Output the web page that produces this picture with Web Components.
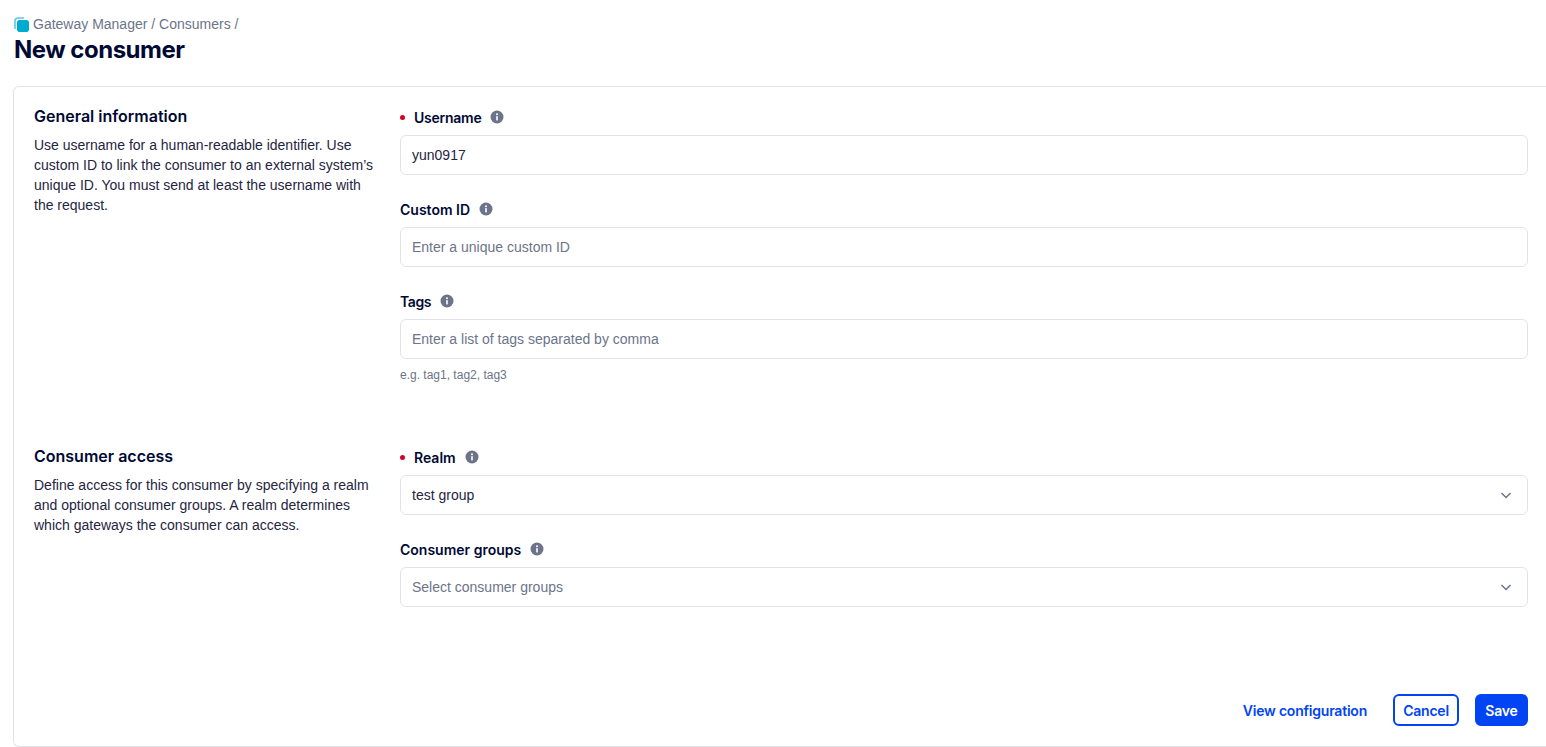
<!DOCTYPE html>
<html>
<head>
<meta charset="utf-8">
<title>New consumer</title>
<style>
  html, body { margin: 0; height: 100%; overflow: hidden; background: #fff; }
  body { font-family: Inter, "Liberation Sans", sans-serif; color: #000933; }
</style>
</head>
<body>
<template id="page-header-tpl">
  <style>
    :host { display: block; padding: 15px 13px 0 14px; height: 86px; box-sizing: border-box; }
    nav { display: flex; align-items: center; height: 18px; font-family: "Liberation Sans", sans-serif; font-size: 14px; color: #6c7489; white-space: pre; }
    svg { width: 15px; height: 15px; margin-right: 4px; flex: none; }
    h1 { margin: 3px 0 0; font-size: 24px; line-height: 28px; font-weight: 700; letter-spacing: -.5px; color: #000933; }
  </style>
  <nav>
    <svg viewBox="0 0 15 15">
      <path d="M1 12V4a3 3 0 0 1 3-3h6" fill="none" stroke="#5fc6e0" stroke-width="1.6"/>
      <rect x="3" y="3" width="12" height="12" rx="2.8" fill="#00abd2"/>
    </svg>
    <span><slot></slot></span>
  </nav>
  <h1><slot name="title"></slot></h1>
</template>

<template id="form-card-tpl">
  <style>
    :host { display: flex; flex-direction: column; height: 661px; box-sizing: border-box; margin-left: 13px;
      border: 1px solid #e0e4ea; border-right: 0; border-radius: 6px 0 0 6px; padding: 20px 18px 20px 20px; }
    .sections { flex: 1; display: flex; flex-direction: column; gap: 64px; }
    .actions { display: flex; justify-content: flex-end; align-items: center; }
  </style>
  <div class="sections"><slot></slot></div>
  <div class="actions"><slot name="actions"></slot></div>
</template>

<template id="form-section-tpl">
  <style>
    :host { display: grid; grid-template-columns: 340px 1fr; column-gap: 26px; }
    h2 { margin: -1px 0 9px; font-size: 16px; line-height: 20px; font-weight: 600; color: #000933; }
    p { margin: 0; font-family: "Liberation Sans", sans-serif; font-size: 14px; line-height: 20px; color: #1f2542; }
    .fields { display: flex; flex-direction: column; gap: 24px; }
  </style>
  <div>
    <h2><slot name="title"></slot></h2>
    <p><slot name="desc"></slot></p>
  </div>
  <div class="fields"><slot></slot></div>
</template>

<template id="form-field-tpl">
  <style>
    :host { display: block; }
    label { display: flex; align-items: center; height: 20px; margin-bottom: 8px; font-size: 14px; font-weight: 600; color: #000933; }
    .dot { display: none; width: 5px; height: 5px; border-radius: 50%; background: #d60027; margin-right: 9px; }
    :host([required]) .dot { display: block; }
    svg { width: 14px; height: 14px; margin-left: 9px; }
    .box { display: flex; align-items: center; height: 40px; box-sizing: border-box; padding: 0 11px;
      border: 1px solid #e0e4ea; border-radius: 6px; font-family: "Liberation Sans", sans-serif; font-size: 14px; letter-spacing: 0; color: #1f2542; background: #fff; }
    .value { flex: 1; }
    :host([placeholder]) .value { color: #6c7489; }
    .chev { display: none; width: 14px; height: 14px; margin: 0 3px 0 0; }
    :host([select]) .chev { display: block; }
    .help { display: none; margin-top: 8px; font-family: "Liberation Sans", sans-serif; font-size: 12px; line-height: 16px; letter-spacing: 0; color: #6c7489; }
    :host([help]) .help { display: block; }
  </style>
  <label>
    <span class="dot"></span>
    <span class="name"></span>
    <svg viewBox="0 0 14 14">
      <circle cx="7" cy="7" r="6.5" fill="#6c7489"/>
      <rect x="6.2" y="6" width="1.6" height="4.4" rx=".4" fill="#fff"/>
      <circle cx="7" cy="4.2" r="1" fill="#fff"/>
    </svg>
  </label>
  <div class="box">
    <span class="value"></span>
    <svg class="chev" viewBox="0 0 14 14"><path d="M2.500 5l4.500 4.500L11.500 5" fill="none" stroke="#6c7489" stroke-width="1.5"/></svg>
  </div>
  <div class="help"></div>
</template>

<template id="action-button-tpl">
  <style>
    :host { display: inline-flex; align-items: center; justify-content: center; height: 32px; box-sizing: border-box;
      border-radius: 6px; font-size: 14px; font-weight: 600; letter-spacing: -.22px; color: #0044f4; }
    :host([kind="link"]) { margin-right: 26px; }
    :host([kind="outline"]) { width: 66px; border: 2px solid #0044f4; margin-right: 16px; }
    :host([kind="primary"]) { width: 53px; background: #0044f4; color: #fff; }
  </style>
  <slot></slot>
</template>

<page-header>Gateway Manager / Consumers / <span slot="title">New consumer</span></page-header>

<form-card>
  <form-section>
    <span slot="title">General information</span>
    <span slot="desc">Use username for a human-readable identifier. Use custom ID to link the consumer to an external system’s unique ID. You must send at least the username with the request.</span>
    <form-field required label="Username" value="yun0917" style="letter-spacing:-.25px"></form-field>
    <form-field label="Custom ID" placeholder="Enter a unique custom ID"></form-field>
    <form-field label="Tags" placeholder="Enter a list of tags separated by comma" help="e.g. tag1, tag2, tag3" style="letter-spacing:-.4px"></form-field>
  </form-section>
  <form-section>
    <span slot="title">Consumer access</span>
    <span slot="desc">Define access for this consumer by specifying a realm and optional consumer groups. A realm determines which gateways the consumer can access.</span>
    <form-field required select label="Realm" value="test group"></form-field>
    <form-field select label="Consumer groups" placeholder="Select consumer groups"></form-field>
  </form-section>
  <action-button slot="actions" kind="link">View configuration</action-button>
  <action-button slot="actions" kind="outline">Cancel</action-button>
  <action-button slot="actions" kind="primary">Save</action-button>
</form-card>

<script>
// Plain wrappers: clone the template into an open shadow root
function simple(tag) {
  customElements.define(tag, class extends HTMLElement {
    constructor() {
      super();
      this.attachShadow({ mode: 'open' });
      this.shadowRoot.appendChild(document.getElementById(tag + '-tpl').content.cloneNode(true));
    }
  });
}
['page-header', 'form-card', 'form-section', 'action-button'].forEach(simple);

class FormField extends HTMLElement {
  constructor() {
    super();
    this.attachShadow({ mode: 'open' });
    this.shadowRoot.appendChild(document.getElementById('form-field-tpl').content.cloneNode(true));
  }

  connectedCallback() {
    const root = this.shadowRoot;
    root.querySelector('.name').textContent = this.getAttribute('label');
    root.querySelector('.value').textContent = this.getAttribute('value') || this.getAttribute('placeholder');
    root.querySelector('.help').textContent = this.getAttribute('help') || '';
  }
}
customElements.define('form-field', FormField);
</script>
</body>
</html>
